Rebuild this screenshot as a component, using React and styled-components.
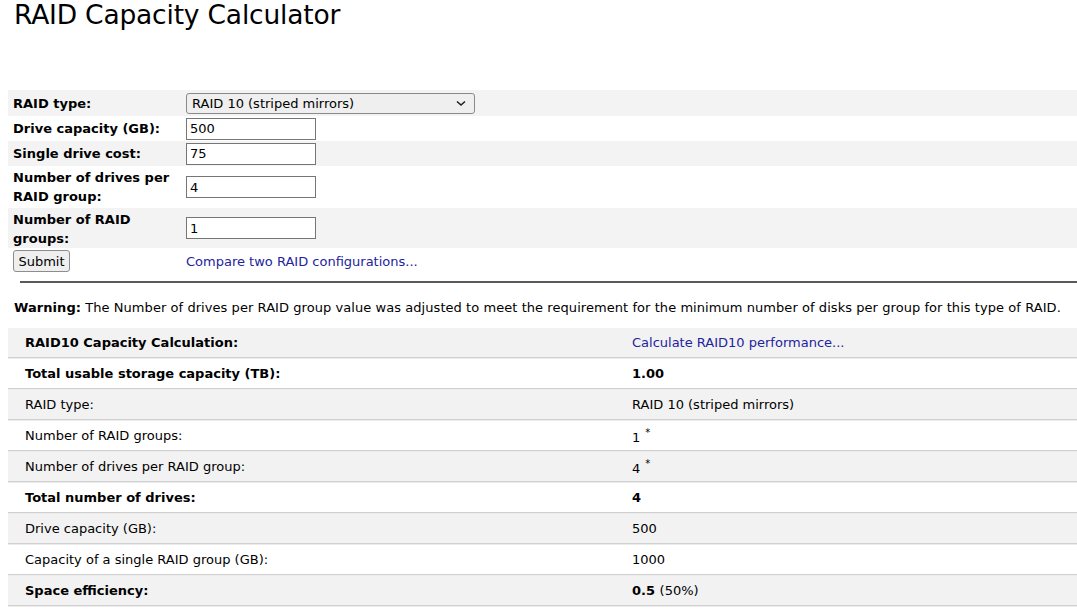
import React from "react";
import styled, { createGlobalStyle } from "styled-components";

const Global = createGlobalStyle`
  html, body {
    margin: 0;
    padding: 0;
    background: #fff;
    font-family: "DejaVu Sans", Verdana, sans-serif;
    color: #000;
  }
`;

const Page = styled.div`
  padding: 0 0 0 8px;
  overflow: hidden;
`;

const Title = styled.h1`
  margin: 0;
  padding: 0 0 0 6px;
  height: 90px;
  font-size: 26.5px;
  font-weight: normal;
  line-height: 30px;
  letter-spacing: -0.2px;
`;

const Form = styled.div`
  display: flex;
  flex-direction: column;
  width: 1069px;
`;

const FormRow = styled.div`
  display: flex;
  align-items: center;
  height: ${(p) => p.h}px;
  background: ${(p) => (p.shaded ? "#f3f3f3" : "#fff")};
`;

const Label = styled.div`
  width: 173px;
  padding-left: 5px;
  font-size: 13px;
  font-weight: bold;
  line-height: 19px;
  align-self: ${(p) => (p.top ? "flex-start" : "center")};
  padding-top: ${(p) => (p.top ? 2 : 0)}px;
`;

const Field = styled.div`
  display: flex;
  align-items: center;
`;

const Select = styled.div`
  width: 274px;
  height: 19px;
  border: 1px solid #8a8a8a;
  border-radius: 3px;
  background: #efefef;
  display: flex;
  align-items: center;
  justify-content: space-between;
  padding: 0 8px 0 5px;
  font-size: 13px;
`;

const Input = styled.input`
  width: 122px;
  height: 18px;
  border: 1px solid #767676;
  padding: 1px 3px;
  font-family: "DejaVu Sans", Verdana, sans-serif;
  font-size: 13px;
  color: #000;
  margin: 0;
  outline: none;
`;

const Button = styled.button`
  margin-left: 5px;
  width: 57px;
  height: 22px;
  border: 1px solid #8d8d8d;
  border-radius: 3px;
  background: #efefef;
  font-family: "DejaVu Sans", Verdana, sans-serif;
  font-size: 13px;
  color: #000;
  padding: 0;
`;

const SubmitCell = styled.div`
  width: 178px;
`;

const Link = styled.a`
  color: #2323a0;
  text-decoration: none;
  font-size: 13px;
`;

const Rule = styled.hr`
  margin: 7px 0 0 12px;
  border: 0;
  height: 2px;
  background: #5a5a5a;
`;

const Warning = styled.p`
  margin: 15px 0 0 6px;
  font-size: 13px;
  line-height: 20px;
  letter-spacing: 0.06px;
  white-space: nowrap;
`;

const Results = styled.div`
  margin-top: 10px;
  width: 1069px;
`;

const ResultRow = styled.div`
  display: grid;
  grid-template-columns: 624px 1fr;
  align-items: center;
  height: 29px;
  background: ${(p) => (p.shaded ? "#f2f2f2" : "#fff")};
  border-bottom: 1px solid #d0d0d0;
  box-shadow: 0 1px 0 #ececec;
  margin-bottom: 1px;
  font-size: 13px;
  font-weight: ${(p) => (p.bold ? "bold" : "normal")};
`;

const Cell = styled.div`
  padding-left: ${(p) => (p.first ? 17 : 0)}px;
`;

const Star = styled.sup`
  font-size: 10px;
  margin-left: 5px;
  vertical-align: 6px;
`;

const Light = styled.span`
  font-weight: normal;
`;

const Chevron = () => (
  <svg width="10" height="7" viewBox="0 0 10 7">
    <path d="M1 1.5 L5 5 L9 1.5" fill="none" stroke="#222" strokeWidth="1.6" />
  </svg>
);

const rows = [
  { label: "RAID10 Capacity Calculation:", value: <Link>Calculate RAID10 performance...</Link>, bold: true, shaded: true, linkCell: true },
  { label: "Total usable storage capacity (TB):", value: "1.00", bold: true },
  { label: "RAID type:", value: "RAID 10 (striped mirrors)", shaded: true },
  { label: "Number of RAID groups:", value: <>1<Star>*</Star></> },
  { label: "Number of drives per RAID group:", value: <>4<Star>*</Star></>, shaded: true },
  { label: "Total number of drives:", value: "4", bold: true },
  { label: "Drive capacity (GB):", value: "500", shaded: true },
  { label: "Capacity of a single RAID group (GB):", value: "1000" },
  { label: "Space efficiency:", value: <>0.5 <Light>(50%)</Light></>, bold: true, shaded: true },
];

export default function App() {
  return (
    <Page>
      <Global />
      <Title>RAID Capacity Calculator</Title>
      <Form>
        <FormRow h={26} shaded>
          <Label>RAID type:</Label>
          <Field>
            <Select>
              <span>RAID 10 (striped mirrors)</span>
              <Chevron />
            </Select>
          </Field>
        </FormRow>
        <FormRow h={25}>
          <Label>Drive capacity (GB):</Label>
          <Field><Input defaultValue="500" /></Field>
        </FormRow>
        <FormRow h={25} shaded>
          <Label>Single drive cost:</Label>
          <Field><Input defaultValue="75" /></Field>
        </FormRow>
        <FormRow h={42}>
          <Label top>Number of drives per RAID group:</Label>
          <Field><Input defaultValue="4" /></Field>
        </FormRow>
        <FormRow h={40} shaded>
          <Label top>Number of RAID groups:</Label>
          <Field><Input defaultValue="1" /></Field>
        </FormRow>
        <FormRow h={26}>
          <SubmitCell><Button>Submit</Button></SubmitCell>
          <Link>Compare two RAID configurations...</Link>
        </FormRow>
      </Form>
      <Rule />
      <Warning>
        <b>Warning:</b> The Number of drives per RAID group value was adjusted to meet the requirement for the minimum number of disks per group for this type of RAID.
      </Warning>
      <Results>
        {rows.map((r, i) => (
          <ResultRow key={i} shaded={r.shaded} bold={r.bold}>
            <Cell first>{r.label}</Cell>
            <Cell style={r.linkCell ? { fontWeight: "normal" } : undefined}>{r.value}</Cell>
          </ResultRow>
        ))}
      </Results>
    </Page>
  );
}
